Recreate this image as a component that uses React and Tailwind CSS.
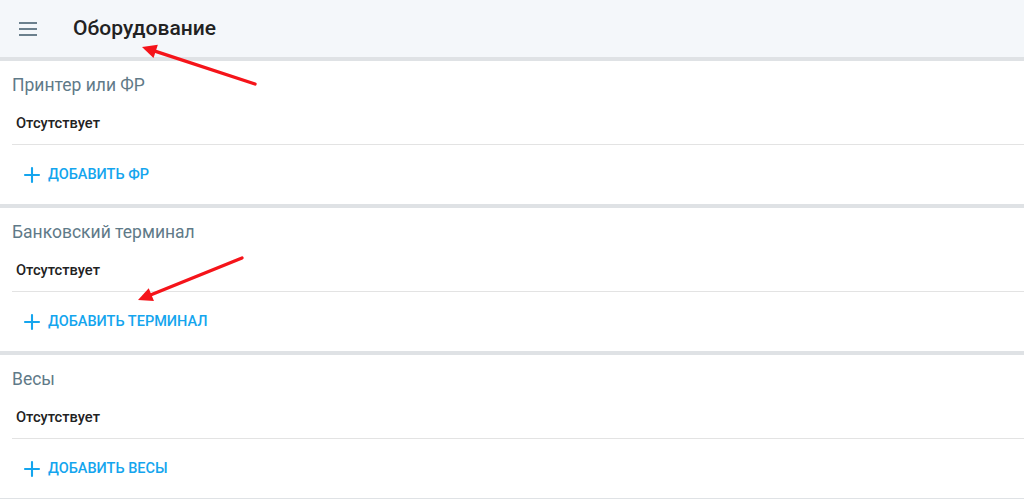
import { Plus } from 'lucide-react';

const sections = [
  { title: 'Принтер или ФР', action: 'Добавить ФР' },
  { title: 'Банковский терминал', action: 'Добавить терминал' },
  { title: 'Весы', action: 'Добавить весы' },
];

function Arrow({ x1, y1, x2, y2 }) {
  const ang = Math.atan2(y2 - y1, x2 - x1);
  const len = 16;
  const w = 0.45;
  const p1 = [x2 - len * Math.cos(ang - w), y2 - len * Math.sin(ang - w)];
  const p2 = [x2 - len * Math.cos(ang + w), y2 - len * Math.sin(ang + w)];
  const bx = x2 - len * 0.8 * Math.cos(ang);
  const by = y2 - len * 0.8 * Math.sin(ang);
  return (
    <g>
      <line x1={x1} y1={y1} x2={bx} y2={by} stroke="#f5141a" strokeWidth="3.4" strokeLinecap="round" />
      <polygon points={`${x2},${y2} ${p1[0]},${p1[1]} ${p2[0]},${p2[1]}`} fill="#f5141a" />
    </g>
  );
}

export default function App() {
  return (
    <div className="relative h-[499px] w-[1024px] overflow-hidden bg-[#dfe2e5]" style={{ fontFamily: 'Roboto, "Noto Sans", sans-serif' }}>
      <header className="flex h-[57px] items-center bg-[#f4f7fa]">
        <div className="ml-[19px] flex w-[18px] flex-col gap-[4px]">
          <span className="h-[2px] bg-[#6b808d]" />
          <span className="h-[2px] bg-[#6b808d]" />
          <span className="h-[2px] bg-[#6b808d]" />
        </div>
        <h1 className="ml-[36px] text-[21px] font-medium text-[#222]">Оборудование</h1>
      </header>
      <div className="mt-[4px] flex flex-col gap-[4px]">
        {sections.map((s) => (
          <section key={s.title} className="h-[143px] bg-white pl-[12px]">
            <div className="flex h-[48px] items-center text-[17.5px] text-[#5f7a88]">{s.title}</div>
            <div className="flex h-[36px] items-center border-b border-[#e3e3e3] pb-[6px] pl-[4px] text-[14.7px] font-medium text-[#222]">
              Отсутствует
            </div>
            <button className="flex h-[56px] items-center gap-[4px] pl-[8px] pt-[3px] text-[14.5px] font-medium uppercase text-[#14a5ee]">
              <Plus size={24} strokeWidth={2.1} />
              {s.action}
            </button>
          </section>
        ))}
      </div>
      <svg className="pointer-events-none absolute left-0 top-0" width="1024" height="499">
        <Arrow x1={255} y1={84} x2={142} y2={47} />
        <Arrow x1={242} y1={258} x2={138} y2={300} />
      </svg>
    </div>
  );
}
